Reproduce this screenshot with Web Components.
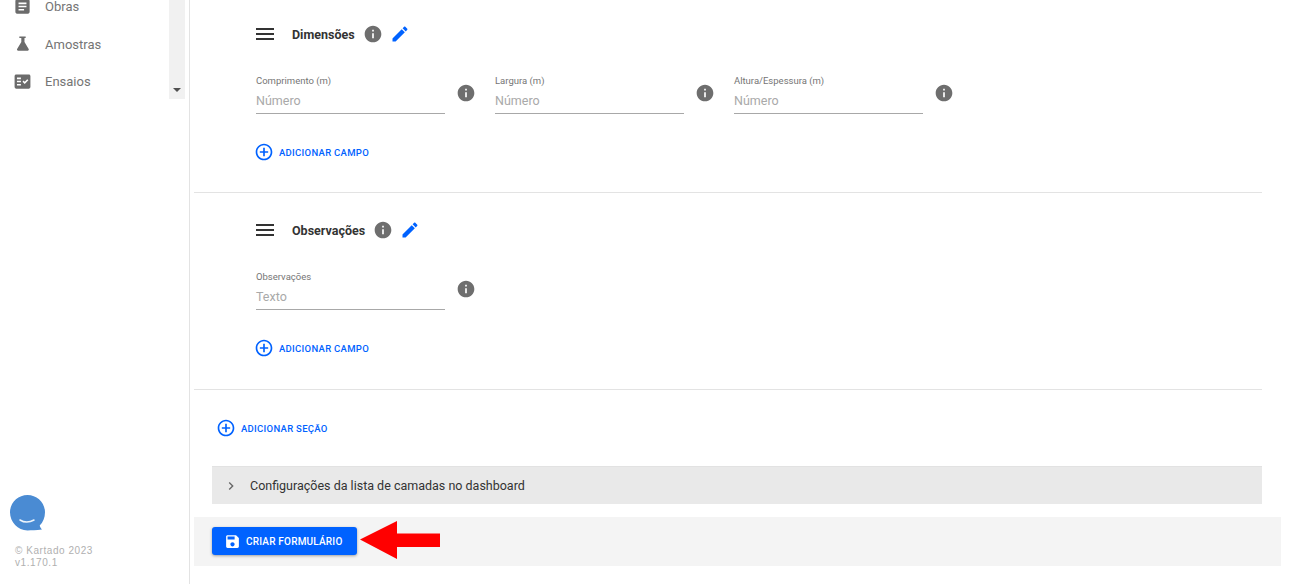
<!DOCTYPE html>
<html lang="pt">
<head>
<meta charset="utf-8">
<title>Kartado</title>
<style>
  html, body { margin: 0; height: 584px; overflow: hidden; background: #fff; font-family: Roboto, sans-serif; }
  body { display: flex; }
</style>
</head>
<body>
<k-sidebar>
  <k-nav-item icon="article">Obras</k-nav-item>
  <k-nav-item icon="flask">Amostras</k-nav-item>
  <k-nav-item icon="check">Ensaios</k-nav-item>
</k-sidebar>
<k-main>
  <k-section title="Dimensões" shift="0">
    <k-field label="Comprimento (m)" placeholder="Número"></k-field>
    <k-field label="Largura (m)" placeholder="Número"></k-field>
    <k-field label="Altura/Espessura (m)" placeholder="Número"></k-field>
  </k-section>
  <k-section title="Observações" shift="1">
    <k-field label="Observações" placeholder="Texto"></k-field>
  </k-section>
  <k-add-button class="add-section">ADICIONAR SEÇÃO</k-add-button>
  <k-accordion>Configurações da lista de camadas no dashboard</k-accordion>
  <k-footer>CRIAR FORMULÁRIO</k-footer>
</k-main>

<script>
const ICONS = {
  menu: "M3 18h18v-2H3v2zm0-5h18v-2H3v2zm0-7v2h18V6H3z",
  info: "M12 2C6.48 2 2 6.48 2 12s4.48 10 10 10 10-4.48 10-10S17.52 2 12 2zm1 15h-2v-6h2v6zm0-8h-2V7h2v2z",
  edit: "M3 17.25V21h3.75L17.81 9.94l-3.75-3.75L3 17.25zM20.71 7.04c.39-.39.39-1.02 0-1.41l-2.34-2.34c-.39-.39-1.02-.39-1.41 0l-1.83 1.83 3.75 3.75 1.83-1.83z",
  add: "M13 7h-2v4H7v2h4v4h2v-4h4v-2h-4V7zm-1-5C6.48 2 2 6.48 2 12s4.48 10 10 10 10-4.48 10-10S17.52 2 12 2zm0 18c-4.41 0-8-3.59-8-8s3.59-8 8-8 8 3.59 8 8-3.59 8-8 8z",
  save: "M17 3H5c-1.11 0-2 .9-2 2v14c0 1.1.89 2 2 2h14c1.1 0 2-.9 2-2V7l-4-4zm-5 16c-1.66 0-3-1.34-3-3s1.34-3 3-3 3 1.34 3 3-1.34 3-3 3zm3-10H5V5h10v4z",
  chevron: "M10 6L8.59 7.41 13.17 12l-4.58 4.59L10 18l6-6z",
  article: "M19 3H5c-1.1 0-2 .9-2 2v14c0 1.1.9 2 2 2h14c1.1 0 2-.9 2-2V5c0-1.1-.9-2-2-2zm-5 14H7v-2h7v2zm3-4H7v-2h10v2zm0-4H7V7h10v2z",
  flask: "M8 3h8v2h-1.5v5l5.3 9c.5 1-.1 2-1.2 2H6.4c-1.1 0-1.7-1-1.2-2l5.3-9V5H8z",
  check: "M20 3H4c-1.1 0-2 .9-2 2v14c0 1.1.9 2 2 2h16c1.1 0 2-.9 2-2V5c0-1.1-.9-2-2-2zM10 17H5v-2h5v2zm0-4H5v-2h5v2zm0-4H5V7h5v2zm4.82 6L12 12.16l1.41-1.41 1.41 1.42L17.99 9l1.42 1.42L14.82 15z"
};

class KIcon extends HTMLElement {
  connectedCallback() {
    const size = this.getAttribute("size") || 24;
    const path = ICONS[this.getAttribute("name")];
    this.attachShadow({ mode: "open" }).innerHTML = `
      <style>
        :host { display: inline-flex; flex: none; width: ${size}px; height: ${size}px; color: inherit; }
        svg { display: block; width: 100%; height: 100%; fill: currentColor; }
      </style>
      <svg viewBox="0 0 24 24"><path d="${path}"/></svg>`;
  }
}

class KSidebar extends HTMLElement {
  connectedCallback() {
    this.attachShadow({ mode: "open" }).innerHTML = `
      <style>
        :host { display: flex; flex-direction: column; flex: none; box-sizing: border-box; width: 190px; height: 584px; border-right: 1px solid #e3e3e3; }
        .top { display: flex; height: 99px; width: 185px; overflow: hidden; }
        .list { flex: 1; margin-top: -12px; }
        .scroll { width: 16px; background: #f1f1f1; display: flex; flex-direction: column; justify-content: flex-end; align-items: center; padding-bottom: 7px; box-sizing: border-box; }
        .arrow { width: 0; height: 0; border-left: 4px solid transparent; border-right: 4px solid transparent; border-top: 4px solid #505050; }
        .chat { margin: auto 0 0 9px; width: 37px; height: 38px; }
        .chat svg { display: block; width: 100%; height: 100%; }
        .copy { margin: 13px 0 15px 15px; font: 10px/12px "Liberation Sans", sans-serif; letter-spacing: .55px; color: #b0b0b0; }
      </style>
      <div class="top">
        <div class="list"><slot></slot></div>
        <div class="scroll"><div class="arrow"></div></div>
      </div>
      <div class="chat">
        <svg viewBox="0 0 37 38">
          <path fill="#4a8bd3" d="M18.5 1C8.9 1 1 8.8 1 18.3 1 28 8.9 36.4 18.5 36.4c4.300 0 8.300-.3 14.500-.9-1.300-1.300-2-2.300-2.300-3.900C33.900 28.500 36 23.800 36 18.300 36 8.800 28.100 1 18.500 1z"/>
          <path fill="none" stroke="#fff" stroke-width="1.500" stroke-linecap="round" d="M11 26c4 2.500 9.500 2.500 14 0" opacity=".9"/>
        </svg>
      </div>
      <div class="copy">© Kartado 2023<br>v1.170.1</div>`;
  }
}

class KNavItem extends HTMLElement {
  connectedCallback() {
    this.attachShadow({ mode: "open" }).innerHTML = `
      <style>
        :host { display: flex; align-items: center; height: 37.5px; padding-left: 13px; gap: 13px; font-size: 13px; color: #757575; }
        k-icon { color: #6b6b6b; margin-top: -1px; }
      </style>
      <k-icon name="${this.getAttribute("icon")}" size="19"></k-icon><slot></slot>`;
  }
}

class KMain extends HTMLElement {
  connectedCallback() {
    this.attachShadow({ mode: "open" }).innerHTML = `
      <style>
        :host { display: block; flex: 1; min-width: 0; box-sizing: border-box; margin-top: -3px; padding: 0 38px 0 4px; }
      </style>
      <slot></slot>`;
  }
}

class KSection extends HTMLElement {
  connectedCallback() {
    const extra = Number(this.getAttribute("shift")) || 0;
    this.attachShadow({ mode: "open" }).innerHTML = `
      <style>
        :host { display: block; box-sizing: border-box; padding: 25px 0 ${30 + extra}px 62px; border-bottom: 1px solid #e3e3e3; }
        .head { display: flex; align-items: center; height: 24px; }
        .head .menu { margin-left: -3px; color: #333; }
        .title { margin-left: 15px; font-size: 12.500px; font-weight: 700; color: #333; }
        .info { margin-left: 8px; color: #6e6e6e; }
        .edit { margin-left: 7px; color: #0062ff; }
        .fields { display: flex; gap: 19px; margin: 28px 0; }
      </style>
      <div class="head">
        <k-icon class="menu" name="menu" size="24"></k-icon>
        <span class="title">${this.getAttribute("title")}</span>
        <k-icon class="info" name="info" size="20"></k-icon>
        <k-icon class="edit" name="edit" size="20"></k-icon>
      </div>
      <div class="fields"><slot></slot></div>
      <k-add-button>ADICIONAR CAMPO</k-add-button>`;
  }
}

class KField extends HTMLElement {
  connectedCallback() {
    this.attachShadow({ mode: "open" }).innerHTML = `
      <style>
        :host { display: flex; align-items: center; gap: 11px; }
        .box { box-sizing: border-box; width: 189px; height: 40px; border-bottom: 1px solid #a8a8a8; }
        .label { font-size: 9.500px; line-height: 14px; color: #757575; }
        .value { margin-top: 4px; font-size: 12.500px; line-height: 18px; color: #a9a9a9; }
        k-icon { color: #6e6e6e; margin-top: -3px; }
      </style>
      <div class="box">
        <div class="label">${this.getAttribute("label")}</div>
        <div class="value">${this.getAttribute("placeholder")}</div>
      </div>
      <k-icon name="info" size="20"></k-icon>`;
  }
}

class KAddButton extends HTMLElement {
  connectedCallback() {
    const offset = this.classList.contains("add-section") ? "28px 0 0 22px" : "0 0 0 -2px";
    this.attachShadow({ mode: "open" }).innerHTML = `
      <style>
        :host { display: flex; align-items: center; gap: 5px; height: 20px; margin: ${offset}; font-size: 9.500px; font-weight: 500; letter-spacing: .3px; color: #0062ff; }
      </style>
      <k-icon name="add" size="20"></k-icon><slot></slot>`;
  }
}

class KAccordion extends HTMLElement {
  connectedCallback() {
    this.attachShadow({ mode: "open" }).innerHTML = `
      <style>
        :host { display: flex; align-items: center; box-sizing: border-box; height: 38px; margin: 28px 0 0 18px; padding-left: 11px; gap: 11px; background: #e9e9e9; border-top: 1px solid #e2e2e2; font-size: 12.500px; color: #333; }
        k-icon { color: #666; }
      </style>
      <k-icon name="chevron" size="16"></k-icon><slot></slot>`;
  }
}

class KFooter extends HTMLElement {
  connectedCallback() {
    this.attachShadow({ mode: "open" }).innerHTML = `
      <style>
        :host { display: flex; align-items: center; position: relative; height: 49px; margin: 13px -19px 0 0; padding: 0 0 1px 18px; box-sizing: border-box; background: #f4f4f4; }
        button { display: flex; align-items: center; gap: 5px; width: 145px; height: 28px; padding: 0 0 0 12px; border: 0; border-radius: 3px; background: #0062ff; box-shadow: 0 1px 3px rgba(0,0,0,.35); color: #fff; font: 500 10px Roboto, sans-serif; letter-spacing: .2px; }
        .arrow { position: absolute; left: 166px; top: 4px; width: 81px; height: 38px; }
        .arrow svg { display: block; width: 100%; height: 100%; }
      </style>
      <button><k-icon name="save" size="17"></k-icon><slot></slot></button>
      <div class="arrow"><svg viewBox="0 0 81 38"><polygon fill="#ff0000" points="0,18.500 37,0 37,12.500 80,12.500 80,26 37,26 37,38"/></svg></div>`;
  }
}

customElements.define("k-icon", KIcon);
customElements.define("k-sidebar", KSidebar);
customElements.define("k-nav-item", KNavItem);
customElements.define("k-main", KMain);
customElements.define("k-section", KSection);
customElements.define("k-field", KField);
customElements.define("k-add-button", KAddButton);
customElements.define("k-accordion", KAccordion);
customElements.define("k-footer", KFooter);
</script>
</body>
</html>
